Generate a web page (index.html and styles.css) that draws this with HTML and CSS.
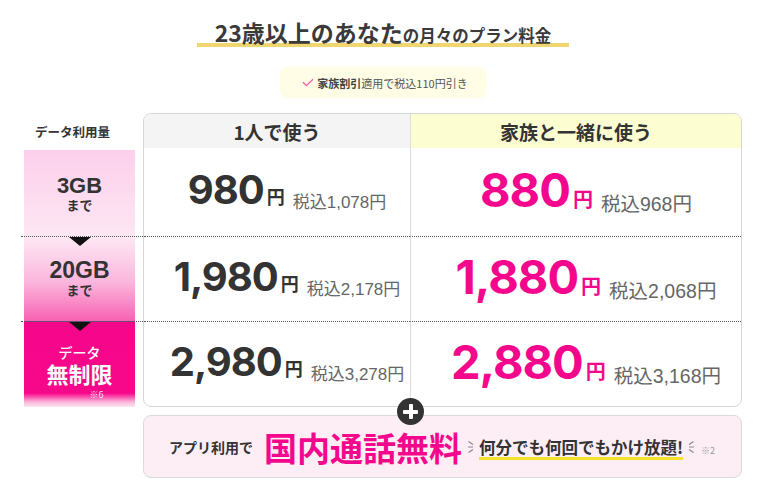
FILE: index.html
```html
<!DOCTYPE html>
<html lang="ja">
<head>
<meta charset="utf-8">
<title>料金プラン</title>
<link rel="stylesheet" href="styles.css">
</head>
<body>
<div class="page">
  <div class="title-wrap">
    <h1 class="title"><span class="t-big">23歳以上のあなた</span><span class="t-small">の月々のプラン料金</span></h1>
  </div>
  <div class="badge">
    <svg class="check" width="12" height="9" viewBox="0 0 12 9"><path d="M1 4.2 L4.4 7.6 L11 1.2" fill="none" stroke="#f25bb0" stroke-width="1.3"/></svg>
    <b>家族割引</b><span>適用で税込110円引き</span>
  </div>
  <div class="plan">
    <div class="side">
      <div class="side-label">データ利用量</div>
      <div class="side-cell s1"><span class="gb">3GB</span><span class="made">まで</span></div>
      <div class="side-cell s2 sep"><span class="gb">20GB</span><span class="made">まで</span></div>
      <div class="side-cell s3 sep"><span class="data">データ</span><span class="unl">無制限</span><span class="note">※6</span></div>
    </div>
    <div class="table">
      <div class="th th-solo">1人で使う</div>
      <div class="th th-family">家族と一緒に使う</div>

      <div class="td solo"><span class="price"><span class="num">980</span><span class="yen">円</span><span class="tax">税込1,078円</span></span></div>
      <div class="td family"><span class="price"><span class="num">880</span><span class="yen">円</span><span class="tax">税込968円</span></span></div>

      <div class="td solo dot"><span class="price"><span class="num">1,980</span><span class="yen">円</span><span class="tax">税込2,178円</span></span></div>
      <div class="td family dot"><span class="price"><span class="num">1,880</span><span class="yen">円</span><span class="tax">税込2,068円</span></span></div>

      <div class="td solo dot"><span class="price"><span class="num">2,980</span><span class="yen">円</span><span class="tax">税込3,278円</span></span></div>
      <div class="td family dot"><span class="price"><span class="num">2,880</span><span class="yen">円</span><span class="tax">税込3,168円</span></span></div>
    </div>
  </div>
  <div class="banner-wrap">
    <div class="plus"></div>
    <div class="banner">
      <span class="app">アプリ利用で</span>
      <span class="free">国内通話無料</span>
      <svg class="spark" width="8" height="14" viewBox="0 0 8 14"><path d="M1.5 1.5 L6 4.5 M1 7 L6 7 M1.5 12.5 L6 9.5" fill="none" stroke="#888" stroke-width="1.2"/></svg>
      <span class="catch">何分でも何回でもかけ放題!</span>
      <svg class="spark" width="8" height="14" viewBox="0 0 8 14"><path d="M6.5 1.5 L2 4.5 M7 7 L2 7 M6.5 12.5 L2 9.5" fill="none" stroke="#888" stroke-width="1.2"/></svg>
      <span class="note2">※2</span>
    </div>
  </div>
</div>
</body>
</html>
```
FILE: styles.css
```css
body {
  margin: 0;
  background: #fff;
  font-family: "Noto Sans CJK JP", sans-serif;
  color: #333;
}
.page {
  width: 718px;
  margin-left: 24px;
  padding-top: 14px;
}
.title-wrap {
  display: flex;
  justify-content: center;
}
.title {
  margin: 0;
  width: 372px;
  height: 29px;
  line-height: 29px;
  text-align: center;
  border-bottom: 4px solid #f0d670;
  font-weight: 700;
  white-space: nowrap;
  color: #3a3a3a;
}
.t-big { font-size: 23px; }
.t-small { font-size: 16.5px; }

.badge {
  width: 207px;
  height: 31px;
  margin: 20px auto 0;
  box-sizing: border-box;
  padding-left: 4px;
  background: #fffde6;
  border-radius: 8px;
  display: flex;
  align-items: center;
  justify-content: center;
  font-size: 11px;
  color: #555;
}
.badge .check { margin-right: 3px; }
.badge b { color: #444; }

.plan {
  display: flex;
  gap: 8px;
  margin-top: 15px;
}
.side {
  width: 111px;
  display: flex;
  flex-direction: column;
}
.side-label {
  height: 37px;
  display: flex;
  align-items: center;
  justify-content: center;
  padding-right: 14px;
  font-size: 12.5px;
  font-weight: 700;
}
.side-cell {
  position: relative;
  display: flex;
  flex-direction: column;
  align-items: center;
  justify-content: center;
  box-sizing: border-box;
}
.s1 {
  height: 86px;
  padding-top: 2px;
  background: linear-gradient(#fcd0eb, #fde6f3);
}
.s2 {
  height: 85px;
  background: linear-gradient(#fdeaf5 0%, #fbb5dc 55%, #f862b3 100%);
}
.s3 {
  height: 86px;
  padding-top: 16px;
  background: linear-gradient(#f6068a 0%, #f7088b 84%, #fbb4d9 94%, #fde6f2 100%);
}
.sep::before {
  content: "";
  position: absolute;
  left: -3px;
  right: -8px;
  top: 0;
  border-top: 1px dotted #555;
}
.sep::after {
  content: "";
  position: absolute;
  top: 1px;
  left: 45px;
  border-left: 11px solid transparent;
  border-right: 11px solid transparent;
  border-top: 9px solid #111;
}
.gb {
  font-family: "Liberation Sans", sans-serif;
  font-weight: 700;
  font-size: 22px;
  line-height: 21px;
  color: #333;
}
.s2 .gb { font-size: 23px; }
.made {
  font-size: 13px;
  font-weight: 700;
  line-height: 17px;
  color: #333;
}
.data {
  font-size: 14px;
  line-height: 17px;
  color: #fff;
  font-weight: 500;
}
.unl {
  font-size: 22px;
  line-height: 25px;
  font-weight: 700;
  color: #fff;
}
.note {
  font-size: 9px;
  line-height: 11px;
  color: #fde0ef;
  margin-left: 34px;
  margin-top: 3px;
}

.table {
  flex: 1;
  border: 1px solid #d6d6d6;
  border-radius: 8px;
  overflow: hidden;
  display: grid;
  grid-template-columns: 266px 1fr;
  grid-template-rows: 34px 88px 85px 85px;
}
.th {
  display: flex;
  align-items: center;
  justify-content: center;
  font-size: 19px;
  font-weight: 700;
  color: #333;
}
.th-solo { background: #f4f4f4; }
.th-family {
  background: #fdfdd2;
  border-left: 1px solid #dcdcdc;
}
.td {
  display: flex;
  align-items: center;
  justify-content: center;
  padding-left: 20px;
  padding-bottom: 3px;
  box-sizing: border-box;
}
.td.family { border-left: 1px solid #dcdcdc; }
.td.dot { border-top: 1px dotted #555; }
.price {
  white-space: nowrap;
  line-height: 1;
}
.num {
  font-family: "Inter", "Liberation Sans", sans-serif;
  font-weight: 700;
  font-size: 40px;
  letter-spacing: -1px;
  color: #333;
}
.yen {
  font-size: 18px;
  font-weight: 700;
  margin-left: 3px;
  color: #333;
}
.tax {
  font-family: "Liberation Sans", "Noto Sans CJK JP", sans-serif;
  font-size: 17px;
  color: #666;
  margin-left: 8px;
  vertical-align: -4px;
}
.family .num {
  font-size: 47px;
  color: #f4078c;
}
.family .yen {
  font-size: 20px;
  color: #f4078c;
}
.family .tax { font-size: 19.5px; }

.banner-wrap {
  position: relative;
  margin: 8px 0 0 119px;
  width: 599px;
}
.plus {
  position: absolute;
  left: 254px;
  top: -17px;
  width: 27px;
  height: 27px;
  border-radius: 50%;
  background: #333;
  z-index: 2;
}
.plus::before,
.plus::after {
  content: "";
  position: absolute;
  background: #fff;
  border-radius: 1px;
}
.plus::before { left: 6px; top: 11.5px; width: 15px; height: 4px; }
.plus::after { left: 11.5px; top: 6px; width: 4px; height: 15px; }
.banner {
  height: 63px;
  box-sizing: border-box;
  border: 1px solid #dadada;
  border-radius: 8px;
  background: #fdeef6;
  display: flex;
  align-items: center;
  padding-left: 25px;
}
.app {
  font-size: 14px;
  font-weight: 700;
  color: #333;
}
.free {
  font-size: 33px;
  font-weight: 700;
  color: #f4078c;
  margin-left: 11px;
  margin-right: 5px;
}
.spark { flex: none; }
.catch {
  font-size: 16.5px;
  font-weight: 700;
  color: #333;
  margin: 0 4px;
  text-decoration: underline;
  text-decoration-color: #f5e32a;
  text-decoration-thickness: 3px;
  text-underline-offset: 3px;
}
.note2 {
  font-size: 9px;
  color: #999;
  margin-left: 6px;
  margin-top: 8px;
}
```
